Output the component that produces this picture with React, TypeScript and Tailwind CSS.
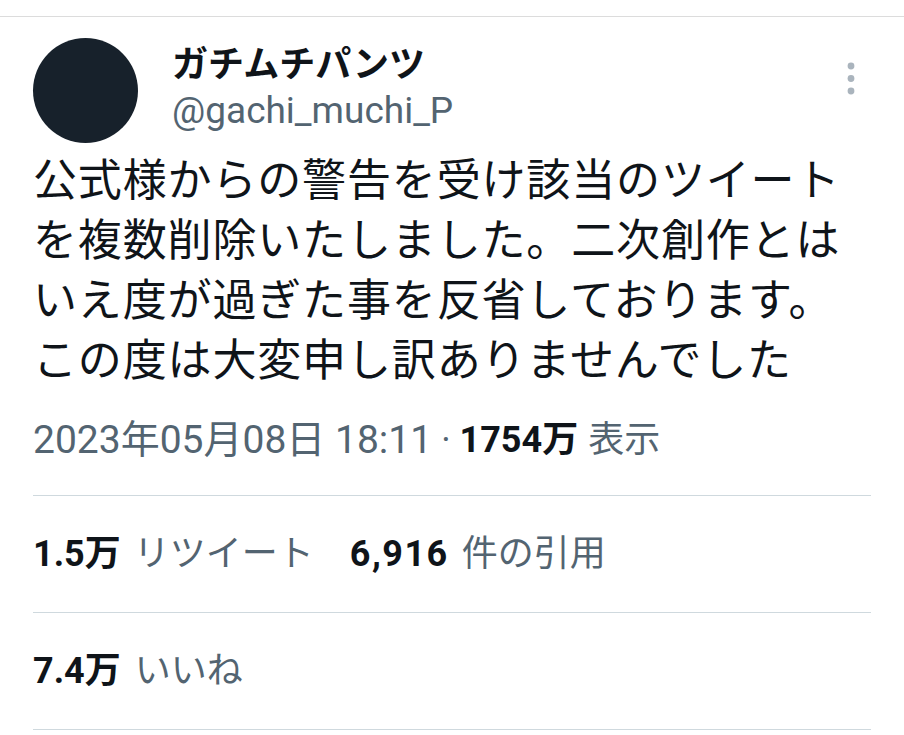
import { type ReactNode } from "react";

const font = "font-['Roboto','Noto_Sans_CJK_JP',sans-serif]";

function MoreIcon() {
  return (
    <svg width="12" height="36" viewBox="0 0 12 36" className="text-[#aab4bd]" fill="currentColor">
      <circle cx="6" cy="6" r="3.4" />
      <circle cx="6" cy="18.5" r="3.4" />
      <circle cx="6" cy="31" r="3.4" />
    </svg>
  );
}

function StatRow({ children }: { children: ReactNode }) {
  return (
    <div className="flex h-[117px] items-center border-b border-[#cfd9de] text-[36px] leading-none">
      {children}
    </div>
  );
}

export default function App() {
  return (
    <div className={`h-[735px] w-[904px] overflow-hidden bg-white text-[#0f1419] ${font}`}>
      <div className="h-[17px] border-b border-[#dcdcdc]" />

      <div className="px-[33px]">
        {/* header */}
        <div className="flex items-start pt-[21px]">
          <div className="h-[105px] w-[105px] shrink-0 rounded-full bg-[#17212b]" />
          <div className="ml-[34px] flex-1 pt-[5px]">
            <div className="text-[36px] font-bold leading-[44px]">ガチムチパンツ</div>
            <div className="mt-[2px] text-[37px] leading-[44px] text-[#536471]">@gachi_muchi_P</div>
          </div>
          <div className="mr-[14px] mt-[22px]">
            <MoreIcon />
          </div>
        </div>

        {/* body */}
        <p className="mt-[8px] text-[44px] leading-[60px] tracking-[0.85px]">
          公式様からの警告を受け該当のツイート
          <br />
          を複数削除いたしました。二次創作とは
          <br />
          いえ度が過ぎた事を反省しております。
          <br />
          この度は大変申し訳ありませんでした
        </p>

        {/* date + views */}
        <div className="mt-[22px] flex h-[54px] items-center leading-none text-[#536471]">
          <span className="text-[39px]">2023年05月08日 18:11</span>
          <span className="mx-[9px] text-[36px]">·</span>
          <span className="text-[36px] font-bold text-[#0f1419]">1754万</span>
          <span className="ml-[10px] text-[36px]">表示</span>
        </div>
        <div className="h-[29px] border-b border-[#cfd9de]" />

        <StatRow>
          <span className="font-bold">1.5万</span>
          <span className="ml-[13px] text-[#536471]">リツイート</span>
          <span className="ml-[36px] font-bold tracking-[1.5px]">6,916</span>
          <span className="ml-[13px] text-[#536471]">件の引用</span>
        </StatRow>
        <StatRow>
          <span className="font-bold">7.4万</span>
          <span className="ml-[14px] text-[#536471]">いいね</span>
        </StatRow>
      </div>
    </div>
  );
}
